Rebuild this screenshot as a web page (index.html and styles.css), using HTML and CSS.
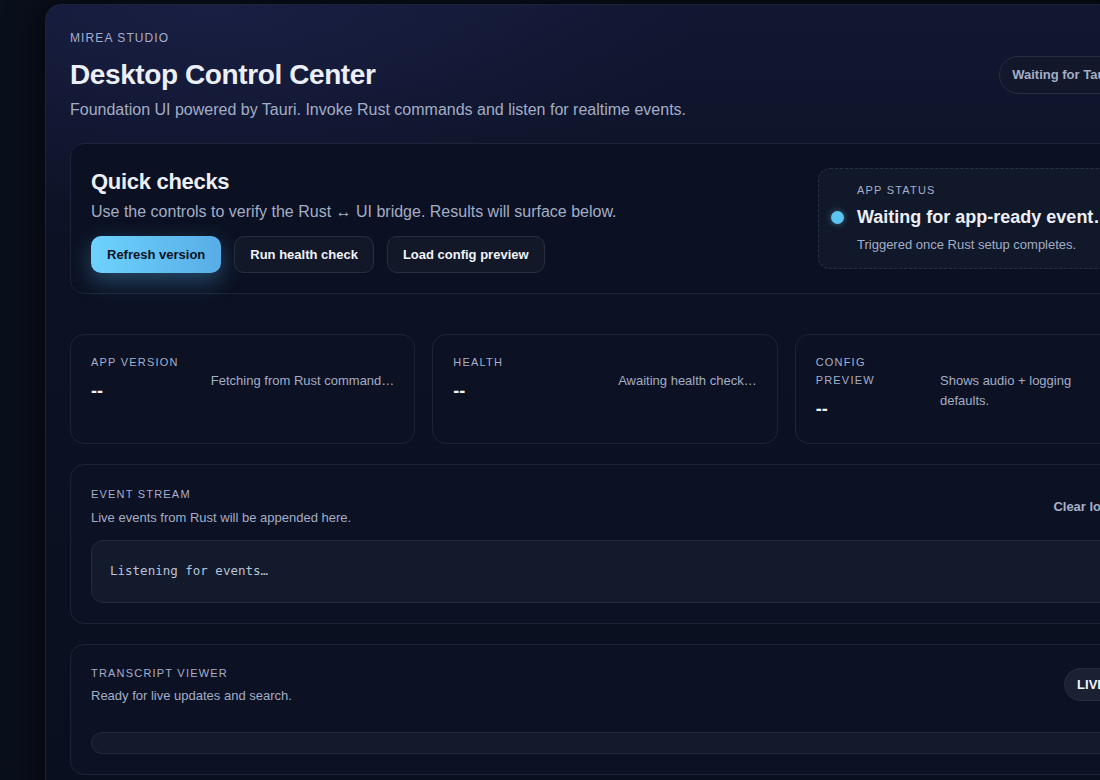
FILE: index.html
```html
<!DOCTYPE html>
<html lang="en">
<head>
  <meta charset="UTF-8" />
  <meta name="viewport" content="width=device-width, initial-scale=1" />
  <title>Desktop Control Center - Mirea Studio</title>
  <link rel="stylesheet" href="styles.css">
</head>
<body>

  <main class="shell">

    <header class="hero">
      <div class="hero-text">
        <div class="eyebrow">Mirea Studio</div>
        <h1>Desktop Control Center</h1>
        <p class="lead">Foundation UI powered by Tauri. Invoke Rust commands and listen for realtime events.</p>
      </div>
      <div class="pill" id="bridgeState">Waiting for Tauri…</div>
    </header>

    <section class="card checks">
      <div class="checks-main">
        <h2>Quick checks</h2>
        <p class="lead">Use the controls to verify the Rust ↔ UI bridge. Results will surface below.</p>
        <div class="btn-row">
          <button class="btn primary" id="refreshVersion">Refresh version</button>
          <button class="btn" id="runHealth">Run health check</button>
          <button class="btn" id="loadConfig">Load config preview</button>
        </div>
      </div>
      <div class="status-box">
        <span class="status-dot"></span>
        <div class="status-text">
          <div class="label">App status</div>
          <div class="status-title" id="appStatus">Waiting for app-ready event…</div>
          <div class="status-sub">Triggered once Rust setup completes.</div>
        </div>
      </div>
    </section>

    <section class="stats">
      <div class="card stat">
        <div class="stat-main">
          <div class="label">App version</div>
          <div class="stat-value" id="versionValue">--</div>
        </div>
        <div class="stat-hint">Fetching from Rust command…</div>
      </div>
      <div class="card stat">
        <div class="stat-main">
          <div class="label">Health</div>
          <div class="stat-value" id="healthValue">--</div>
        </div>
        <div class="stat-hint">Awaiting health check…</div>
      </div>
      <div class="card stat">
        <div class="stat-main">
          <div class="label">Config preview</div>
          <div class="stat-value" id="configValue">--</div>
        </div>
        <div class="stat-hint">Shows audio + logging defaults.</div>
      </div>
    </section>

    <section class="card">
      <div class="card-head">
        <div>
          <div class="label">Event stream</div>
          <p class="small">Live events from Rust will be appended here.</p>
        </div>
        <button class="btn ghost" id="clearLog">Clear log</button>
      </div>
      <pre class="log" id="eventLog">Listening for events…</pre>
    </section>

    <section class="card transcript-card">
      <div class="card-head">
        <div>
          <div class="label">Transcript viewer</div>
          <p class="small">Ready for live updates and search.</p>
        </div>
        <span class="pill live">LIVE</span>
      </div>
      <div class="transcript" id="transcript"></div>
    </section>

  </main>

  <script>
    const eventLog = document.getElementById("eventLog");

    document.getElementById("clearLog").addEventListener("click", () => {
      eventLog.textContent = "Listening for events…";
    });
  </script>

</body>
</html>
```

FILE: styles.css
```css
html, body {
  margin: 0;
  padding: 0;
}
body {
  background: linear-gradient(90deg, #0a0f1c 0%, #070b15 100%);
  color: #e8ebf5;
  font-family: "Liberation Sans", Arial, sans-serif;
  overflow: hidden;
  height: 780px;
  padding: 4px 0 0 45px;
  box-sizing: border-box;
}
.shell {
  width: 1120px;
  box-sizing: border-box;
  padding: 25px 24px 40px;
  border: 1px solid #1d2438;
  border-radius: 16px;
  background:
    radial-gradient(ellipse 700px 300px at 15% 0%, rgba(40, 46, 100, 0.35), transparent 70%),
    linear-gradient(180deg, #111731 0%, #0c1224 30%, #0a0f1f 100%);
  box-shadow: -8px 0 30px rgba(0, 0, 0, 0.55);
}
.hero {
  display: flex;
  justify-content: space-between;
  align-items: center;
  gap: 20px;
  margin-bottom: 23px;
}
.eyebrow {
  font-size: 12px;
  letter-spacing: 1.1px;
  text-transform: uppercase;
  color: #a6aecb;
  line-height: 16px;
}
h1 {
  margin: 12px 0 0;
  font-size: 28px;
  line-height: 34px;
  letter-spacing: -0.4px;
  color: #eceff8;
}
.lead {
  margin: 8px 0 0;
  font-size: 16px;
  line-height: 20px;
  color: #a3adc6;
}
.pill {
  flex-shrink: 0;
  padding: 0 12px;
  height: 38px;
  line-height: 36px;
  box-sizing: border-box;
  border-radius: 19px;
  border: 1px solid #262e44;
  background: #121829;
  color: #a3adc6;
  font-size: 13px;
  font-weight: bold;
  white-space: nowrap;
}
.card {
  background: #0c1223;
  border: 1px solid #1d2438;
  border-radius: 14px;
  padding: 20px;
  margin-bottom: 20px;
}
.checks {
  display: flex;
  justify-content: space-between;
  align-items: center;
  padding: 24px 20px 20px;
  margin-bottom: 40px;
  background: #0b1122;
}
h2 {
  margin: 0;
  font-size: 22px;
  line-height: 28px;
  letter-spacing: -0.3px;
  color: #eceff8;
}
.checks .lead {
  margin-top: 6px;
}
.btn-row {
  display: flex;
  gap: 13px;
  margin-top: 14px;
}
.btn {
  height: 37px;
  padding: 0 15px;
  border-radius: 10px;
  border: 1px solid #262e44;
  background: #121828;
  color: #f1f3fa;
  font-family: inherit;
  font-size: 13px;
  font-weight: bold;
  cursor: pointer;
}
.btn.primary {
  border: none;
  padding: 0 16px;
  background: linear-gradient(90deg, #6dd2fd 0%, #58ade6 100%);
  color: #0b1424;
  box-shadow: 0 8px 22px rgba(88, 180, 240, 0.35);
}
.btn.ghost {
  height: 30px;
  border: none;
  background: none;
  color: #a7b0c8;
  padding: 0 10px;
}
.status-box {
  width: 301px;
  box-sizing: border-box;
  display: flex;
  align-items: center;
  gap: 13px;
  padding: 12px 12px 14px;
  border: 1px dashed #283048;
  border-radius: 12px;
  background: #111829;
  align-self: flex-start;
}
.status-dot {
  width: 13px;
  height: 13px;
  border-radius: 50%;
  flex-shrink: 0;
  background: #5cc4f2;
  box-shadow: 0 0 6px rgba(92, 196, 242, 0.5);
}
.status-text {
  min-width: 0;
  white-space: nowrap;
}
.label {
  font-size: 11px;
  line-height: 18px;
  letter-spacing: 1.2px;
  text-transform: uppercase;
  color: #a6aecb;
}
.status-title {
  margin-top: 7px;
  font-size: 18px;
  line-height: 22px;
  font-weight: bold;
  color: #eceff8;
}
.status-sub {
  margin-top: 8px;
  font-size: 13px;
  line-height: 18px;
  color: #a3adc6;
}
.stats {
  display: grid;
  grid-template-columns: repeat(3, 1fr);
  gap: 17px;
  margin-bottom: 20px;
}
/* label column and hint share the row; both give way when space runs out */
.stat {
  display: flex;
  justify-content: space-between;
  align-items: flex-start;
  gap: 14px;
  margin: 0;
  padding: 18px 20px 22px;
  min-height: 68px;
}
.stat-main {
  flex: 0 1 auto;
  min-width: 0;
}
.stat-value {
  margin-top: 8px;
  font-size: 18px;
  line-height: 24px;
  font-weight: bold;
  color: #f1f3fa;
}
.stat-hint {
  flex: 0 1 auto;
  margin-top: 18px;
  font-size: 13px;
  line-height: 20px;
  color: #a3adc6;
}
.card-head {
  display: flex;
  justify-content: space-between;
  align-items: center;
}
.small {
  margin: 6px 0 0;
  font-size: 13px;
  line-height: 18px;
  color: #a3adc6;
}
.log {
  margin: 13px 0 0;
  padding: 21px 18px 22px;
  border: 1px solid #232b40;
  border-radius: 12px;
  background: #121a2c;
  font-family: "DejaVu Sans Mono", "Liberation Mono", monospace;
  font-size: 12.5px;
  line-height: 18px;
  color: #b9c2d8;
}
.transcript-card {
  padding-top: 19px;
}
.transcript-card .small {
  margin-top: 5px;
}
.pill.live {
  height: 33px;
  line-height: 31px;
  border-radius: 17px;
  background: #1a2133;
  color: #f1f3fa;
  padding: 0 12px;
}
.transcript {
  margin-top: 27px;
  height: 20px;
  border: 1px solid #232b40;
  border-radius: 11px;
  background: #121a2c;
}
```
